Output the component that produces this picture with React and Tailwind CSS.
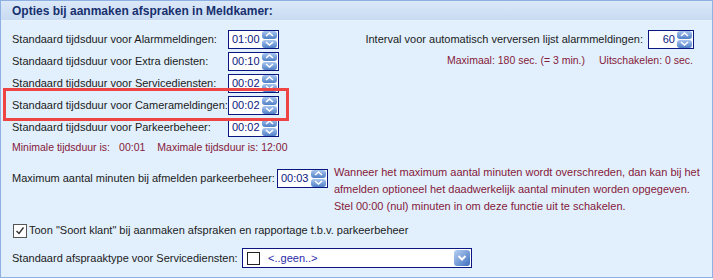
import React from "react";

const font = { fontFamily: '"Liberation Sans", Arial, sans-serif' };

function SpinBtn({ down }) {
  return (
    <div className="w-[15px] h-[8px] rounded-[3px] bg-gradient-to-b from-[#a9c6ef] to-[#4f7fc6] flex items-center justify-center">
      <svg width="9" height="5" viewBox="0 0 9 5">
        <path
          d={down ? "M1 1 L4.5 4 L8 1" : "M1 4 L4.5 1 L8 4"}
          fill="none"
          stroke="white"
          strokeWidth="1.6"
        />
      </svg>
    </div>
  );
}

function TimeInput({ value, w = "w-[51px]", right }) {
  return (
    <div className={`${w} shrink-0 h-[19px] bg-white border border-[#0b1780] flex items-center pl-[3px] pr-[1px]`}>
      <span className={`flex-1 text-[11px] text-[#0b1780] leading-none ${right ? "text-right pr-[2px]" : ""}`}>
        {value}
      </span>
      <div className="flex flex-col gap-[1px]">
        <SpinBtn />
        <SpinBtn down />
      </div>
    </div>
  );
}

const rows = [
  ["Standaard tijdsduur voor Alarmmeldingen:", "01:00"],
  ["Standaard tijdsduur voor Extra diensten:", "00:10"],
  ["Standaard tijdsduur voor Servicediensten:", "00:02"],
  ["Standaard tijdsduur voor Camerameldingen:", "00:02"],
  ["Standaard tijdsduur voor Parkeerbeheer:", "00:02"],
];

export default function App() {
  return (
    <div className="w-[713px] h-[280px] bg-white" style={font}>
      <div className="relative h-[278px] border border-[#8eb0e2] bg-[#e2f0fd] flex flex-col">
        {/* kop */}
        <div className="h-[20px] bg-gradient-to-b from-[#dbe8f8] to-[#c8dbf2] border-b border-[#e8f1fc] flex items-center pl-[11px]">
          <span className="text-[12px] font-bold text-[#172f6e] whitespace-nowrap">
            Opties bij aanmaken afspraken in Meldkamer:
          </span>
        </div>

        {/* tijdsduur en interval */}
        <div className="flex pt-[7px]">
          <div className="pl-[11px] flex flex-col">
            {rows.map(([label, value]) => (
              <div key={label} className="h-[22px] flex items-center">
                <span className="w-[216px] shrink-0 text-[11px] text-[#1b1b1b] whitespace-nowrap">{label}</span>
                <TimeInput value={value} />
              </div>
            ))}
            <div className="h-[20px] flex items-center text-[10.5px] text-[#85193a] whitespace-nowrap">
              <span>Minimale tijdsduur is:</span>
              <span className="ml-[9px]">00:01</span>
              <span className="ml-[12px]">Maximale tijdsduur is: 12:00</span>
            </div>
          </div>
          <div className="flex-1 flex flex-col items-end pr-[18px]">
            <div className="h-[22px] flex items-center gap-[5px]">
              <span className="text-[11px] text-[#1b1b1b] whitespace-nowrap">
                Interval voor automatisch verversen lijst alarmmeldingen:
              </span>
              <TimeInput value="60" w="w-[46px]" right />
            </div>
            <div className="h-[22px] flex items-center text-[10.5px] text-[#85193a] gap-[14px] pr-[1px] whitespace-nowrap">
              <span>Maximaal: 180 sec. (= 3 min.)</span>
              <span>Uitschakelen: 0 sec.</span>
            </div>
          </div>
        </div>

        {/* parkeerbeheer */}
        <div className="flex pl-[11px] pt-[9px]">
          <div className="h-[22px] flex items-center gap-[2px] shrink-0">
            <span className="text-[11px] text-[#1b1b1b] whitespace-nowrap">
              Maximum aantal minuten bij afmelden parkeerbeheer:
            </span>
            <TimeInput value="00:03" />
          </div>
          <div className="ml-[6px] mt-[-3px] text-[11px] leading-[17px] text-[#85193a] whitespace-nowrap">
            <div>Wanneer het maximum aantal minuten wordt overschreden, dan kan bij het</div>
            <div>afmelden optioneel het daadwerkelijk aantal minuten worden opgegeven.</div>
            <div>Stel 00:00 (nul) minuten in om deze functie uit te schakelen.</div>
          </div>
        </div>

        {/* soort klant */}
        <div className="flex items-center pl-[12px] pt-[6px] h-[25px]">
          <div className="w-[14px] h-[14px] shrink-0 border border-[#555] bg-white flex items-center justify-center">
            <svg width="10" height="10" viewBox="0 0 10 10">
              <path d="M1.5 5 L4 7.5 L8.5 1.5" fill="none" stroke="#333" strokeWidth="1.4" />
            </svg>
          </div>
          <span className="ml-[2px] text-[11px] text-[#1b1b1b] whitespace-nowrap">
            Toon "Soort klant" bij aanmaken afspraken en rapportage t.b.v. parkeerbeheer
          </span>
        </div>

        {/* afspraaktype */}
        <div className="flex items-center pl-[11px] pt-[8px]">
          <span className="w-[230px] shrink-0 text-[11px] text-[#1b1b1b] whitespace-nowrap">
            Standaard afspraaktype voor Servicediensten:
          </span>
          <div className="w-[230px] h-[20px] bg-white border border-[#0b1780] flex items-center pl-[4px] pr-[1px]">
            <div className="w-[13px] h-[13px] border border-[#222] bg-white" />
            <span className="ml-[8px] flex-1 text-[11px] text-[#2a2aa8]">&lt;..geen..&gt;</span>
            <div className="w-[16px] h-[16px] rounded-[3px] bg-gradient-to-br from-[#b9d2f4] to-[#3f6fbd] flex items-center justify-center">
              <svg width="10" height="6" viewBox="0 0 10 6">
                <path d="M1.5 1 L5 4.5 L8.5 1" fill="none" stroke="white" strokeWidth="2" />
              </svg>
            </div>
          </div>
        </div>

        {/* markering */}
        <div className="absolute left-[2px] top-[87px] w-[286px] h-[33px] border-[3px] border-[#ef4444] pointer-events-none" />
      </div>
    </div>
  );
}
